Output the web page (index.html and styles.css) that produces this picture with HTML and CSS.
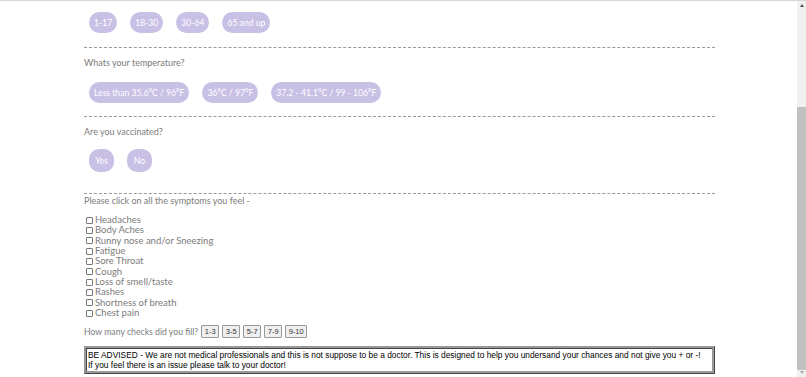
FILE: index.html
```html
<!DOCTYPE html>
<html lang="en">
<head>
    <meta charset="UTF-8">
    <meta name="viewport" content="width=device-width, initial-scale=1.0">
    <title>Covid Self Check</title>
    <link rel="stylesheet" href="styles.css">
</head>
<body>
    <div class="container">
        <div class="question first">
            <div class="options">
                <button class="pill">1-17</button>
                <button class="pill">18-30</button>
                <button class="pill">30-64</button>
                <button class="pill">65 and up</button>
            </div>
        </div>
        <hr class="divider">
        <div class="question">
            <p>Whats your temperature?</p>
            <div class="options">
                <button class="pill">Less than 35.6°C / 96°F</button>
                <button class="pill">36°C / 97°F</button>
                <button class="pill">37.2 - 41.1°C / 99 - 106°F</button>
            </div>
        </div>
        <hr class="divider">
        <div class="question last">
            <p>Are you vaccinated?</p>
            <div class="options">
                <button class="pill round">Yes</button>
                <button class="pill round">No</button>
            </div>
        </div>
        <hr class="divider tight">
        <div class="symptoms">
            <p>Please click on all the symptoms you feel -</p>
            <ul class="checklist">
                <li><label><input type="checkbox">Headaches</label></li>
                <li><label><input type="checkbox">Body Aches</label></li>
                <li><label><input type="checkbox">Runny nose and/or Sneezing</label></li>
                <li><label><input type="checkbox">Fatigue</label></li>
                <li><label><input type="checkbox">Sore Throat</label></li>
                <li><label><input type="checkbox">Cough</label></li>
                <li><label><input type="checkbox">Loss of smell/taste</label></li>
                <li><label><input type="checkbox">Rashes</label></li>
                <li><label><input type="checkbox">Shortness of breath</label></li>
                <li><label><input type="checkbox">Chest pain</label></li>
            </ul>
            <div class="count">
                <span>How many checks did you fill?</span>
                <button class="small">1-3</button>
                <button class="small">3-5</button>
                <button class="small">5-7</button>
                <button class="small">7-9</button>
                <button class="small">9-10</button>
            </div>
        </div>
        <div class="advised">
            BE ADVISED - We are not medical professionals and this is not suppose to be a doctor. This is designed to help you undersand your chances and not give you + or -!<br>
            If you feel there is an issue please talk to your doctor!
        </div>
    </div>
    <!-- page is shown scrolled to the bottom, so draw the scrollbar -->
    <div class="scrollbar">
        <span class="arrow up"></span>
        <div class="thumb"></div>
        <span class="arrow down"></span>
    </div>
</body>
</html>
```

FILE: styles.css
```css
html, body {
    height: 100%;
    overflow: hidden;
}
body {
    font-family: "Lato", sans-serif;
    color: #7c7c7c;
    background-color: #fff;
    margin: 0;
    padding: 0;
    border-top: 1px solid #d6d6d6;
    box-sizing: border-box;
}
.container {
    width: 631px;
    margin-left: 84px;
    padding-top: 11px;
}
.question p, .symptoms p {
    margin: 0;
    font-size: 9px;
    line-height: 12px;
}
.options {
    display: flex;
    gap: 13px;
    padding-left: 5px;
    margin-top: 13px;
    margin-bottom: 13px;
}
.question.first .options {
    margin-top: 0;
    margin-bottom: 14px;
}
.question.last .options {
    margin-top: 11px;
    margin-bottom: 21px;
}
.pill {
    font-family: "Lato", sans-serif;
    font-size: 8.6px;
    color: #fff;
    background-color: #c9c0e6;
    border: none;
    border-radius: 11px;
    height: 21px;
    padding: 0 5px;
}
.pill.round {
    height: 23px;
    width: 25px;
    padding: 0;
    border-radius: 10px;
}
.divider {
    border: none;
    border-top: 1px dashed #999;
    margin: 0 0 9px;
}
.divider.tight {
    margin-bottom: 1px;
}
.checklist {
    list-style: none;
    margin: 8px 0 7px;
    padding: 0;
}
.checklist li {
    font-size: 9.5px;
    line-height: 10.35px;
    height: 10.35px;
}
.checklist label {
    display: flex;
    align-items: center;
    gap: 2px;
}
.checklist input {
    appearance: none;
    width: 7px;
    height: 7px;
    margin: 0 0 0 2px;
    border: 1px solid #777;
    border-radius: 1px;
    background: #fff;
}
.count {
    font-size: 8.7px;
    display: flex;
    align-items: center;
    gap: 3px;
    height: 13px;
}
.small {
    font-family: "Liberation Sans", Arial, sans-serif;
    font-size: 7.5px;
    font-weight: 400;
    height: 13px;
    width: 18px;
    padding: 0;
    background-color: #efefef;
    border: 1px solid #999;
    border-radius: 1px;
    color: #333;
}
.small:last-child {
    width: 22px;
}
.advised {
    margin-top: 8px;
    width: 623px;
    border: 3px ridge #999;
    padding: 1px;
    font-family: "Liberation Sans", Arial, sans-serif;
    font-size: 8.4px;
    line-height: 10px;
    color: #000;
}
.scrollbar {
    position: fixed;
    top: 1px;
    right: 0;
    bottom: 0;
    width: 9px;
    background: #f1f1f1;
    display: flex;
    flex-direction: column;
    align-items: center;
}
.thumb {
    width: 9px;
    margin-top: 100px;
    height: 263px;
    background: #c1c1c1;
}
.arrow {
    width: 0;
    height: 0;
    border-left: 2px solid transparent;
    border-right: 2px solid transparent;
}
.arrow.up {
    margin-top: 3px;
    border-bottom: 3px solid #505050;
}
.arrow.down {
    margin-top: auto;
    margin-bottom: 3px;
    border-top: 3px solid #a3a3a3;
}
```
